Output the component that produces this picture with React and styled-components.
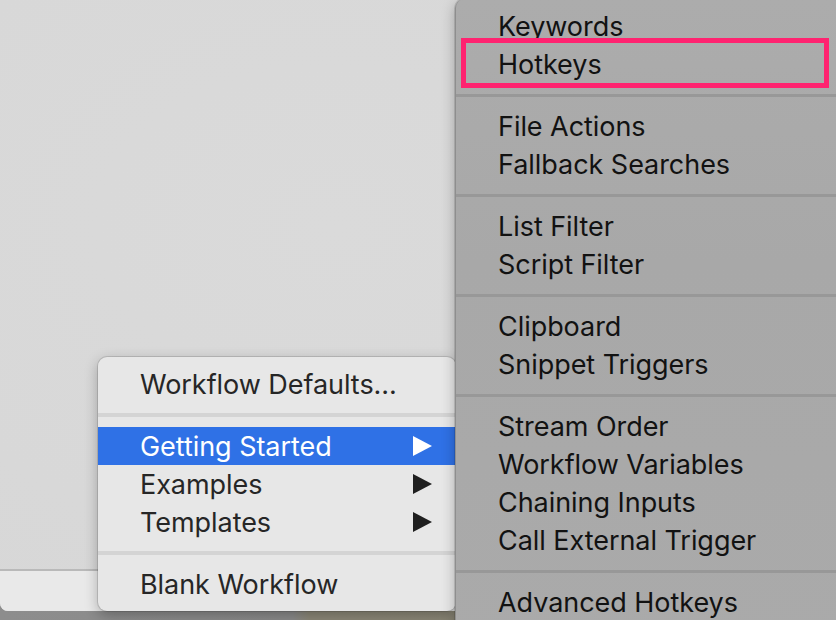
import React from "react";
import styled, { createGlobalStyle } from "styled-components";

const Global = createGlobalStyle`
  html, body { margin: 0; padding: 0; }
  body {
    width: 836px;
    height: 620px;
    overflow: hidden;
    font-family: Inter, "Liberation Sans", sans-serif;
  }
`;

const Desktop = styled.div`
  position: relative;
  width: 836px;
  height: 620px;
  overflow: hidden;
  background: linear-gradient(90deg, #8d8d8d 0%, #8a8a8a 35%, #8b8777 37%, #8a8676 100%);
`;

const Window = styled.div`
  height: 611px;
  display: flex;
  flex-direction: column;
  background: #d9d9d9;
  border-bottom-left-radius: 8px;
  overflow: hidden;
`;

const Canvas = styled.div`
  flex: 1;
  background: radial-gradient(ellipse at 40% 40%, #dadada 0%, #d7d7d7 100%);
`;

const BottomBar = styled.div`
  height: 40px;
  border-top: 2px solid #b9b9b9;
  background: #e9e9e9;
`;

const Menu = styled.div`
  position: absolute;
  box-sizing: border-box;
  display: flex;
  flex-direction: column;
  border-radius: 9px;
  box-shadow: 0 0 0 1px rgba(0, 0, 0, 0.12), 0 4px 14px rgba(0, 0, 0, 0.28);
`;

const LeftMenu = styled(Menu)`
  left: 98px;
  top: 357px;
  width: 358px;
  height: 254px;
  padding: 8px 0;
  background: #e7e7e7;
  color: #262626;
`;

const RightMenu = styled(Menu)`
  left: 455px;
  top: -1px;
  width: 400px;
  height: 660px;
  padding: 8px 0;
  background: linear-gradient(180deg, #acacac 0%, #a8a8a8 40%, #aaaaaa 100%);
  border-left: 1px solid #8e8e8e;
  color: #121212;
`;

const Item = styled.div`
  position: relative;
  display: flex;
  align-items: center;
  justify-content: space-between;
  box-sizing: border-box;
  height: 38px;
  padding: 0 24px 0 ${(p) => p.$indent}px;
  font-size: 27px;
  letter-spacing: -0.05px;
  white-space: nowrap;
  background: ${(p) => (p.$active ? "#2f71e6" : "transparent")};
  color: ${(p) => (p.$active ? "#ffffff" : "inherit")};
`;

const Separator = styled.div`
  height: 24px;
  display: flex;
  align-items: center;
  &::after {
    content: "";
    flex: 1;
    height: ${(p) => (p.$dark ? 3 : 4)}px;
    background: ${(p) => (p.$dark ? "#989898" : "#d4d4d4")};
  }
`;

const Arrow = styled.svg`
  width: 19px;
  height: 20px;
  flex: none;
`;

const Highlight = styled.div`
  position: absolute;
  left: 5px;
  width: 358px;
  top: -7px;
  bottom: -5px;
  border: 5px solid #ff2370;
  pointer-events: none;
`;

const SubArrow = ({ color }) => (
  <Arrow viewBox="0 0 19 20">
    <polygon points="0,0 19,10 0,20" fill={color} />
  </Arrow>
);

const rightGroups = [
  ["Keywords", "Hotkeys"],
  ["File Actions", "Fallback Searches"],
  ["List Filter", "Script Filter"],
  ["Clipboard", "Snippet Triggers"],
  ["Stream Order", "Workflow Variables", "Chaining Inputs", "Call External Trigger"],
  ["Advanced Hotkeys"],
];

export default function App() {
  return (
    <>
      <Global />
      <Desktop>
        <Window>
          <Canvas />
          <BottomBar />
        </Window>

        <LeftMenu>
          <Item $indent={42}>Workflow Defaults...</Item>
          <Separator />
          <Item $indent={42} $active>
            Getting Started
            <SubArrow color="#ffffff" />
          </Item>
          <Item $indent={42}>
            Examples
            <SubArrow color="#1f1f1f" />
          </Item>
          <Item $indent={42}>
            Templates
            <SubArrow color="#1f1f1f" />
          </Item>
          <Separator />
          <Item $indent={42}>Blank Workflow</Item>
        </LeftMenu>

        <RightMenu>
          {rightGroups.map((group, gi) => (
            <React.Fragment key={gi}>
              {gi > 0 && <Separator $dark />}
              {group.map((label) => (
                <Item key={label} $indent={42}>
                  {label}
                  {label === "Hotkeys" && <Highlight />}
                </Item>
              ))}
            </React.Fragment>
          ))}
        </RightMenu>
      </Desktop>
    </>
  );
}
